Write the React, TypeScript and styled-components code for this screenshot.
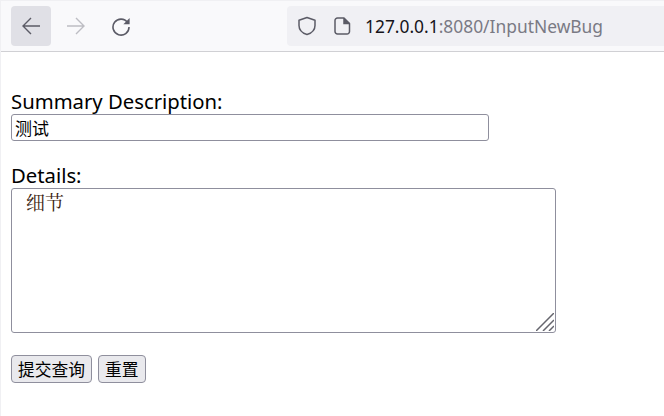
import React from "react";
import styled, {createGlobalStyle} from "styled-components";

const GlobalStyle = createGlobalStyle`
  html, body {
    margin: 0;
    padding: 0;
    background: #ffffff;
  }
  body {
    font-family: "Noto Sans", "Noto Sans CJK SC", sans-serif;
  }
`;

const Page = styled.div`
  width: 664px;
  height: 416px;
  overflow: hidden;
  box-sizing: border-box;
  border-top: 1px solid #f0f0f3;
  border-left: 1px solid #f0f0f3;
`;

const Toolbar = styled.div`
  height: 51px;
  box-sizing: border-box;
  background: #f9f9fb;
  border-bottom: 1px solid #d0d0d4;
  padding: 5px 0 4px 10px;
  display: flex;
  align-items: flex-start;
`;

const NavButton = styled.div<{$active?: boolean}>`
  width: 40px;
  height: 40px;
  margin-right: 5px;
  border-radius: 4px;
  display: flex;
  align-items: center;
  justify-content: center;
  background: ${p => (p.$active ? "#e0e0e6" : "transparent")};
`;

const AddressBar = styled.div`
  margin-left: 141px;
  flex: 1;
  height: 40px;
  background: #f0f0f4;
  border-radius: 4px 0 0 4px;
  display: flex;
  align-items: center;
  padding-left: 10px;
`;

const AddressIcon = styled.span<{$gap: number}>`
  display: flex;
  color: #5b5b66;
  margin-right: ${p => p.$gap}px;
`;

const Url = styled.div`
  font-size: 17.4px;
  color: #7a7a84;
  white-space: nowrap;
  span {
    color: #15141a;
  }
`;

const Form = styled.form`
  padding: 38px 0 0 10px;
  display: flex;
  flex-direction: column;
  align-items: flex-start;
`;

const Label = styled.label`
  display: block;
  font-size: 20.3px;
  line-height: 22px;
  margin-bottom: 2px;
  color: #000000;
`;

const TextInput = styled.input`
  box-sizing: border-box;
  width: 478px;
  height: 27px;
  margin: 0 0 23px;
  padding: 0 3px;
  border: 1px solid #8f8f9d;
  border-radius: 3px;
  font-family: "Noto Sans CJK SC", sans-serif;
  font-size: 17px;
  color: #000000;
  outline: none;
`;

const AreaWrap = styled.div`
  position: relative;
  width: 545px;
  height: 145px;
  margin: 0 0 22px;
`;

const DetailArea = styled.textarea`
  box-sizing: border-box;
  display: block;
  width: 100%;
  height: 100%;
  padding: 0 14px;
  border: 1px solid #8f8f9d;
  border-radius: 3px;
  font-family: "Noto Serif CJK SC", "Noto Sans CJK SC", serif;
  font-size: 19px;
  line-height: 26px;
  color: #3b2410;
  outline: none;
  resize: none;
`;

const Grip = styled.svg`
  position: absolute;
  right: 2px;
  bottom: 2px;
`;

const Buttons = styled.div`
  display: flex;
  gap: 6px;
`;

const FormButton = styled.button`
  box-sizing: border-box;
  height: 28px;
  padding: 0 6px;
  background: #e9e9ed;
  border: 1px solid #8f8f9d;
  border-radius: 4px;
  font-family: "Noto Sans CJK SC", sans-serif;
  font-size: 16.75px;
  color: #000000;
`;

const App = () => (
    <Page>
        <GlobalStyle/>
        <Toolbar>
            <NavButton $active>
                <svg width="20" height="20" viewBox="0 0 20 20" fill="none" stroke="#5b5b66" strokeWidth="1.4">
                    <path d="M19 10H2M10 2l-8 8 8 8"/>
                </svg>
            </NavButton>
            <NavButton>
                <svg width="20" height="20" viewBox="0 0 20 20" fill="none" stroke="#bdbdc3" strokeWidth="1.4">
                    <path d="M1 10h17M10 2l8 8-8 8"/>
                </svg>
            </NavButton>
            <NavButton>
                <svg width="20" height="20" viewBox="0 0 20 20" fill="none" stroke="#5b5b66" strokeWidth="1.6">
                    <path d="M16.600 6.600A8 8 0 1 0 18 11"/>
                    <path d="M18.600 2v6.200h-6.200z" fill="#5b5b66" stroke="none"/>
                </svg>
            </NavButton>
            <AddressBar>
                <AddressIcon $gap={17}>
                    <svg width="20" height="20" viewBox="0 0 20 20" fill="none" stroke="currentColor" strokeWidth="1.5">
                        <path d="M10 1.500l8 2.700v5.300c0 4.400-3.400 7.600-8 9-4.600-1.400-8-4.600-8-9V4.200z" strokeLinejoin="round"/>
                    </svg>
                </AddressIcon>
                <AddressIcon $gap={14}>
                    <svg width="17" height="18" viewBox="0 0 17 18" fill="none" stroke="currentColor" strokeWidth="1.5">
                        <path d="M3.500 1h6.500l5.500 5.500V14.500a2.500 2.500 0 0 1-2.500 2.500H3.500A2.500 2.500 0 0 1 1 14.500V3.500A2.500 2.500 0 0 1 3.500 1z" strokeLinejoin="round"/>
                        <path d="M10 1v5.500h5.500" fill="currentColor"/>
                    </svg>
                </AddressIcon>
                <Url><span>127.0.0.1</span>:8080/InputNewBug</Url>
            </AddressBar>
        </Toolbar>
        <Form onSubmit={e => e.preventDefault()}>
            <Label htmlFor="summary">Summary Description:</Label>
            <TextInput id="summary" defaultValue="测试"/>
            <Label htmlFor="details">Details:</Label>
            <AreaWrap>
                <DetailArea id="details" defaultValue="细节"/>
                <Grip width="18" height="18" viewBox="0 0 18 18" stroke="#66666e" strokeWidth="1.5">
                    <path d="M0 18L18 0M7 18L18 7M13 18l5-5"/>
                </Grip>
            </AreaWrap>
            <Buttons>
                <FormButton type="submit">提交查询</FormButton>
                <FormButton type="reset">重置</FormButton>
            </Buttons>
        </Form>
    </Page>
);

export default App;
